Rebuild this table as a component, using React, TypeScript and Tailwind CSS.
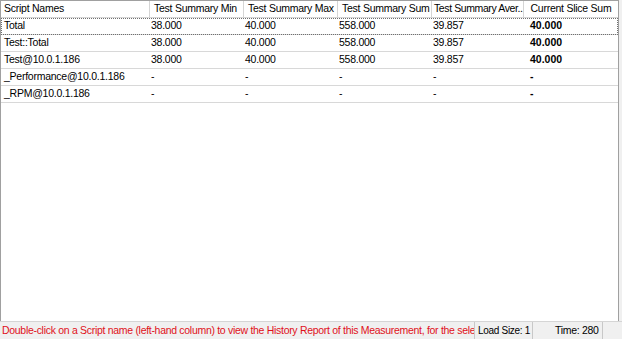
import React from "react";

const cols = [
  { name: "Script Names", w: 149, align: "left" },
  { name: "Test Summary Min", w: 94, align: "left" },
  { name: "Test Summary Max", w: 94, align: "left" },
  { name: "Test Summary Sum", w: 94, align: "left" },
  { name: "Test Summary Aver...", w: 92, align: "left" },
  { name: "Current Slice Sum", w: 95, align: "center" },
];

const rows = [
  ["Total", "38.000", "40.000", "558.000", "39.857", "40.000"],
  ["Test::Total", "38.000", "40.000", "558.000", "39.857", "40.000"],
  ["Test@10.0.1.186", "38.000", "40.000", "558.000", "39.857", "40.000"],
  ["_Performance@10.0.1.186", "-", "-", "-", "-", "-"],
  ["_RPM@10.0.1.186", "-", "-", "-", "-", "-"],
];

export default function App() {
  return (
    <div
      className="w-[622px] h-[339px] flex flex-col bg-[#f0f0f0] text-[10.5px] tracking-[-0.25px] text-black overflow-hidden"
      style={{ fontFamily: '"Liberation Sans", Arial, sans-serif' }}
    >
      <div className="flex-1 bg-white border-l border-t border-r border-[#a0a0a0] mr-[3px] overflow-hidden">
        <div className="flex h-[17px] border-b border-[#d5d5d5]">
          {cols.map((c, i) => (
            <div
              key={i}
              className={`shrink-0 h-full flex items-center border-r border-[#d5d5d5] whitespace-nowrap overflow-hidden ${
                c.align === "center"
                  ? "justify-center"
                  : i === 0
                  ? "pl-[3px]"
                  : i === 4
                  ? "pl-[2px] tracking-[-0.4px]"
                  : "pl-[4px]"
              }`}
              style={{ width: c.w }}
            >
              {c.name}
            </div>
          ))}
        </div>
        {rows.map((r, ri) => (
          <div
            key={ri}
            className={`flex h-[17px] border-b border-[#d8d8d8] ${
              ri === 0 ? "outline outline-1 outline-dotted outline-[#707070] -outline-offset-1" : ""
            }`}
          >
            {r.map((cell, ci) => (
              <div
                key={ci}
                className={`shrink-0 h-full flex items-center whitespace-nowrap overflow-hidden ${
                  ci === 0 ? "pl-[3px]" : ci === 5 ? "pl-[6px] font-bold tracking-normal" : "pl-[1px]"
                }`}
                style={{ width: cols[ci].w }}
              >
                {cell}
              </div>
            ))}
          </div>
        ))}
      </div>
      <div className="h-[18px] flex items-center border-t border-[#d5d5d5] bg-[#f0f0f0] tracking-[-0.3px]">
        <div className="w-[475px] shrink-0 pl-[2px] text-[#e0101a] whitespace-nowrap overflow-hidden border-r border-[#c8c8c8] h-full flex items-center">
          <span className="block overflow-hidden w-full">
            Double-click on a Script name (left-hand column) to view the History Report of this Measurement, for the selected time period.
          </span>
        </div>
        <div className="w-[58px] shrink-0 pl-[3px] border-r border-[#c8c8c8] h-full flex items-center whitespace-nowrap text-[10px]">
          Load Size: 1
        </div>
        <div className="w-[70px] shrink-0 pl-[22px] border-r border-[#c8c8c8] h-full flex items-center whitespace-nowrap">
          Time: 280
        </div>
        <div className="flex-1" />
      </div>
    </div>
  );
}
